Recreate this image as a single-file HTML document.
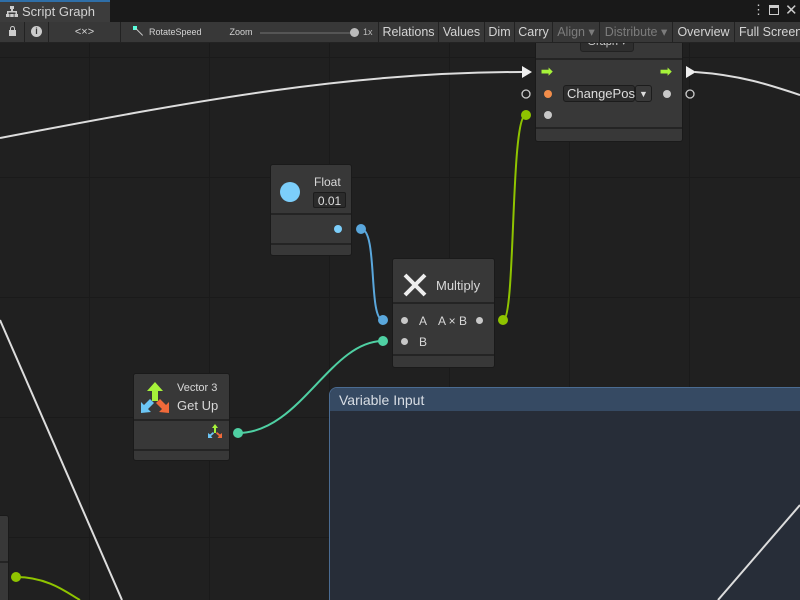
<!DOCTYPE html>
<html style="overflow:hidden;width:800px;height:600px"><head><style>
body{margin:0;width:800px;height:600px;overflow:hidden;background:#202020;font-family:"Liberation Sans",sans-serif;position:relative}
.abs{position:absolute}
.grid{position:absolute;left:0;top:43px;width:800px;height:557px;
background-image:linear-gradient(#1a1a1a 1px,transparent 1px),linear-gradient(90deg,#1a1a1a 1px,transparent 1px);
background-size:120px 120px,120px 120px;background-position:0 14px,89px 0}
.tabrow{left:0;top:0;width:800px;height:22px;background:#191919;z-index:5}
.tab{left:0;top:0;width:110px;height:22px;background:#3c3c3c;border-top:2px solid #2f6fa8;box-sizing:border-box;color:#d2d2d2;font-size:13px;line-height:19px;padding-left:22px;z-index:6}
.tb{left:0;top:22px;width:800px;height:21px;background:#3c3c3c;border-bottom:1px solid #232323;box-sizing:border-box;z-index:5}
.btn{position:absolute;top:0;height:20px;background:#383838;border-right:1px solid #222;color:#d4d4d4;font-size:12.5px;line-height:20px;text-align:center;box-sizing:border-box;white-space:nowrap;overflow:hidden}
.node{position:absolute;background:#383838;border:1px solid #1a1a1a;border-radius:3px;box-sizing:border-box}
.sep{position:absolute;left:0;right:0;height:2px;background:#242424}
.t{position:absolute;color:#d8d8d8;font-size:12px;white-space:nowrap}
.dot{position:absolute;width:8px;height:8px;border-radius:50%}
</style></head><body>
<div class="grid"></div>
<div class="abs tabrow"></div>
<div class="abs tab">Script Graph</div>
<svg class="abs" style="left:6px;top:6px;z-index:7" width="12" height="12"><g fill="#ccc"><rect x="4" y="0" width="4" height="3"/><rect x="5" y="3" width="2" height="3"/><rect x="1" y="5" width="10" height="1.5"/><rect x="1" y="5" width="1.5" height="3"/><rect x="9.5" y="5" width="1.5" height="3"/><rect x="0" y="8" width="3.5" height="3"/><rect x="4.2" y="8" width="3.5" height="3"/><rect x="8.5" y="8" width="3.5" height="3"/></g></svg>
<div class="abs" style="left:752px;top:2px;color:#ccc;font-size:13px;z-index:7">⋮</div>
<div class="abs" style="left:769px;top:5px;width:10px;height:10px;border:1.5px solid #ccc;border-top-width:3px;box-sizing:border-box;z-index:7"></div>
<div class="abs" style="left:785px;top:1px;color:#ccc;font-size:15px;z-index:7">✕</div>
<div class="abs tb">
<div class="btn" style="left:0;width:25px"><span style="display:inline-block;width:7px;height:6px;background:#ccc;margin-top:8px;position:relative"><span style="position:absolute;left:1px;top:-4px;width:3px;height:3px;border:1px solid #ccc;border-bottom:none;border-radius:3px 3px 0 0"></span></span></div>
<div class="btn" style="left:25px;width:24px"><span style="display:inline-block;width:11px;height:11px;border-radius:50%;background:#ccc;color:#383838;font-size:9px;line-height:11px;font-weight:bold;margin-top:4px;vertical-align:top">i</span></div>
<div class="btn" style="left:49px;width:72px;font-size:11px">&lt;×&gt;</div>
<div class="btn" style="left:121px;width:258px;font-size:9px;text-align:left;padding-left:28px">RotateSpeed<span style="margin-left:28px">Zoom</span></div>
<div class="abs" style="left:133px;top:4px;width:4px;height:4px;background:#5fd"></div>
<div class="abs" style="left:136px;top:6px;width:10px;height:1px;background:#ccc;transform:rotate(45deg);transform-origin:0 0"></div>
<div class="abs" style="left:260px;top:10px;width:95px;height:2px;background:#555"></div>
<div class="abs" style="left:350px;top:6px;width:9px;height:9px;border-radius:50%;background:#bbb"></div>
<div class="abs" style="left:363px;top:0;color:#bbb;font-size:9px;line-height:20px">1x</div>
<div class="btn" style="left:379px;width:60px">Relations</div>
<div class="btn" style="left:439px;width:46px">Values</div>
<div class="btn" style="left:485px;width:30px">Dim</div>
<div class="btn" style="left:515px;width:38px">Carry</div>
<div class="btn" style="left:553px;width:47px;color:#7c7c7c">Align ▾</div>
<div class="btn" style="left:600px;width:73px;color:#7c7c7c">Distribute ▾</div>
<div class="btn" style="left:673px;width:62px">Overview</div>
<div class="btn" style="left:735px;width:70px;text-align:left;padding-left:4px">Full Screen</div>
</div>

<!-- group -->
<div class="abs" style="left:329px;top:387px;width:480px;height:230px;background:#272d38;border:1px solid #4b6c92;border-radius:8px"></div>
<div class="abs" style="left:330px;top:388px;width:480px;height:23px;background:#364a63;border-radius:7px 0 0 0;color:#d8dde4;font-size:14px;line-height:24px;padding-left:9px;box-sizing:border-box">Variable Input</div>

<svg class="abs" style="left:0;top:0" width="800" height="600">
<g fill="none" stroke-width="2">
<path d="M0 138 C200 100 350 72 522 72" stroke="#ddd"/>
<path d="M695 72 C740 75 770 85 800 95" stroke="#ddd" />
<path d="M0 320 L122 600" stroke="#ddd"/>
<path d="M718 600 L800 505" stroke="#ddd"/>
<path d="M526 115 C510 115 516 320 503 320" stroke="#8fc400"/>
<path d="M361 229 C378 229 368 320 383 320" stroke="#5aa7dc"/>
<path d="M238 433 C300 433 330 341 383 341" stroke="#4fd0a3"/>
<path d="M16 577 C50 577 70 595 80 600" stroke="#8fc400"/>
</g>
<polygon points="522,66 532,72 522,78" fill="#eee"/>
<polygon points="686,66 696,72 686,78" fill="#eee"/>
<circle cx="526" cy="94" r="4" fill="none" stroke="#ccc" stroke-width="1.3"/>
<circle cx="690" cy="94" r="4" fill="none" stroke="#ccc" stroke-width="1.3"/>
<circle cx="526" cy="115" r="5" fill="#8fc400"/>
<circle cx="503" cy="320" r="5" fill="#8fc400"/>
<circle cx="361" cy="229" r="5" fill="#5aa7dc"/>
<circle cx="383" cy="320" r="5" fill="#5aa7dc"/>
<circle cx="383" cy="341" r="5" fill="#4fd0a3"/>
<circle cx="238" cy="433" r="5" fill="#4fd0a3"/>
<circle cx="16" cy="577" r="5" fill="#8fc400"/>
</svg>

<!-- top node -->
<div class="node" style="left:535px;top:20px;width:148px;height:122px">
<div class="sep" style="top:37px"></div><div class="sep" style="top:106px"></div>
<div class="abs" style="left:44px;top:15px;width:52px;height:14px;border:1px solid #222;background:#2e2e2e;border-radius:3px;color:#ccc;font-size:11px;line-height:10px;text-align:center;overflow:hidden">Graph ▾</div>
<div class="abs" style="left:5px;top:42px;color:#a6f23a;font-size:14px;font-weight:bold">➡</div>
<div class="abs" style="left:124px;top:42px;color:#a6f23a;font-size:14px;font-weight:bold">➡</div>
<div class="dot" style="left:8px;top:69px;background:#f28d4a"></div>
<div class="dot" style="left:8px;top:90px;background:#c8c8c8"></div>
<div class="dot" style="left:127px;top:69px;background:#c8c8c8"></div>
<div class="abs" style="left:27px;top:64px;width:72px;height:17px;background:#2d2d2d;border:1px solid #1c1c1c;border-radius:3px;color:#ddd;font-size:13px;line-height:16px;padding-left:3px;box-sizing:border-box;white-space:nowrap">ChangePos</div>
<div class="abs" style="left:99px;top:64px;width:17px;height:17px;background:#3a3a3a;border:1px solid #1c1c1c;border-radius:3px;color:#ddd;font-size:9px;line-height:17px;text-align:center;box-sizing:border-box">▼</div>
</div>

<!-- float -->
<div class="node" style="left:270px;top:164px;width:82px;height:92px">
<div class="sep" style="top:48px"></div><div class="sep" style="top:78px"></div>
<div class="abs" style="left:9px;top:17px;width:20px;height:20px;border-radius:50%;background:#7ccefa"></div>
<div class="t" style="left:43px;top:10px">Float</div>
<div class="abs" style="left:42px;top:27px;width:33px;height:16px;background:#2b2b2b;border:1px solid #1c1c1c;border-radius:2px;color:#ddd;font-size:12px;line-height:16px;text-align:center;box-sizing:border-box">0.01</div>
<div class="dot" style="left:63px;top:60px;background:#7ccefa"></div>
</div>

<!-- multiply -->
<div class="node" style="left:392px;top:258px;width:103px;height:110px">
<div class="sep" style="top:43px"></div><div class="sep" style="top:95px"></div>
<svg class="abs" style="left:9px;top:13px" width="26" height="26"><path d="M3 3L23 23M23 3L3 23" stroke="#eee" stroke-width="4"/></svg>
<div class="t" style="left:43px;top:19px;font-size:13px">Multiply</div>
<div class="dot" style="left:8px;top:58px;background:#c8c8c8;width:7px;height:7px"></div>
<div class="dot" style="left:8px;top:79px;background:#c8c8c8;width:7px;height:7px"></div>
<div class="dot" style="left:83px;top:58px;background:#c8c8c8;width:7px;height:7px"></div>
<div class="t" style="left:26px;top:55px">A</div>
<div class="t" style="left:45px;top:55px">A × B</div>
<div class="t" style="left:26px;top:76px">B</div>
</div>

<!-- vector3 -->
<div class="node" style="left:133px;top:373px;width:97px;height:88px">
<div class="sep" style="top:45px"></div><div class="sep" style="top:75px"></div>
<svg class="abs" style="left:5px;top:7px" width="32" height="34">
<path d="M16 1 L24 10 L19 10 L19 20 L13 20 L13 10 L8 10 Z" fill="#a6f23a"/>
<path d="M2 32 L2 21 L5 24 L11 18 L15 22 L9 28 L12 31 Z" fill="#6cc6f5"/>
<path d="M30 32 L30 21 L27 24 L21 18 L17 22 L23 28 L20 31 Z" fill="#f06a3a"/>
</svg>
<div class="t" style="left:43px;top:8px;font-size:11px">Vector 3</div>
<div class="t" style="left:43px;top:24px;font-size:13px">Get Up</div>
<svg class="abs" style="left:73px;top:49px" width="16" height="16">
<path d="M8 1 L11 5 L9 5 L9 10 L7 10 L7 5 L5 5 Z" fill="#a6f23a"/>
<path d="M1 15 L1 10 L3 11.5 L6 9 L7 10.5 L4 13 L5.5 15 Z" fill="#6cc6f5"/>
<path d="M15 15 L15 10 L13 11.5 L10 9 L9 10.5 L12 13 L10.5 15 Z" fill="#f06a3a"/>
</svg>
</div>

<!-- left partial node -->
<div class="node" style="left:-10px;top:515px;width:19px;height:100px"><div class="sep" style="top:45px"></div></div>
</body></html>
